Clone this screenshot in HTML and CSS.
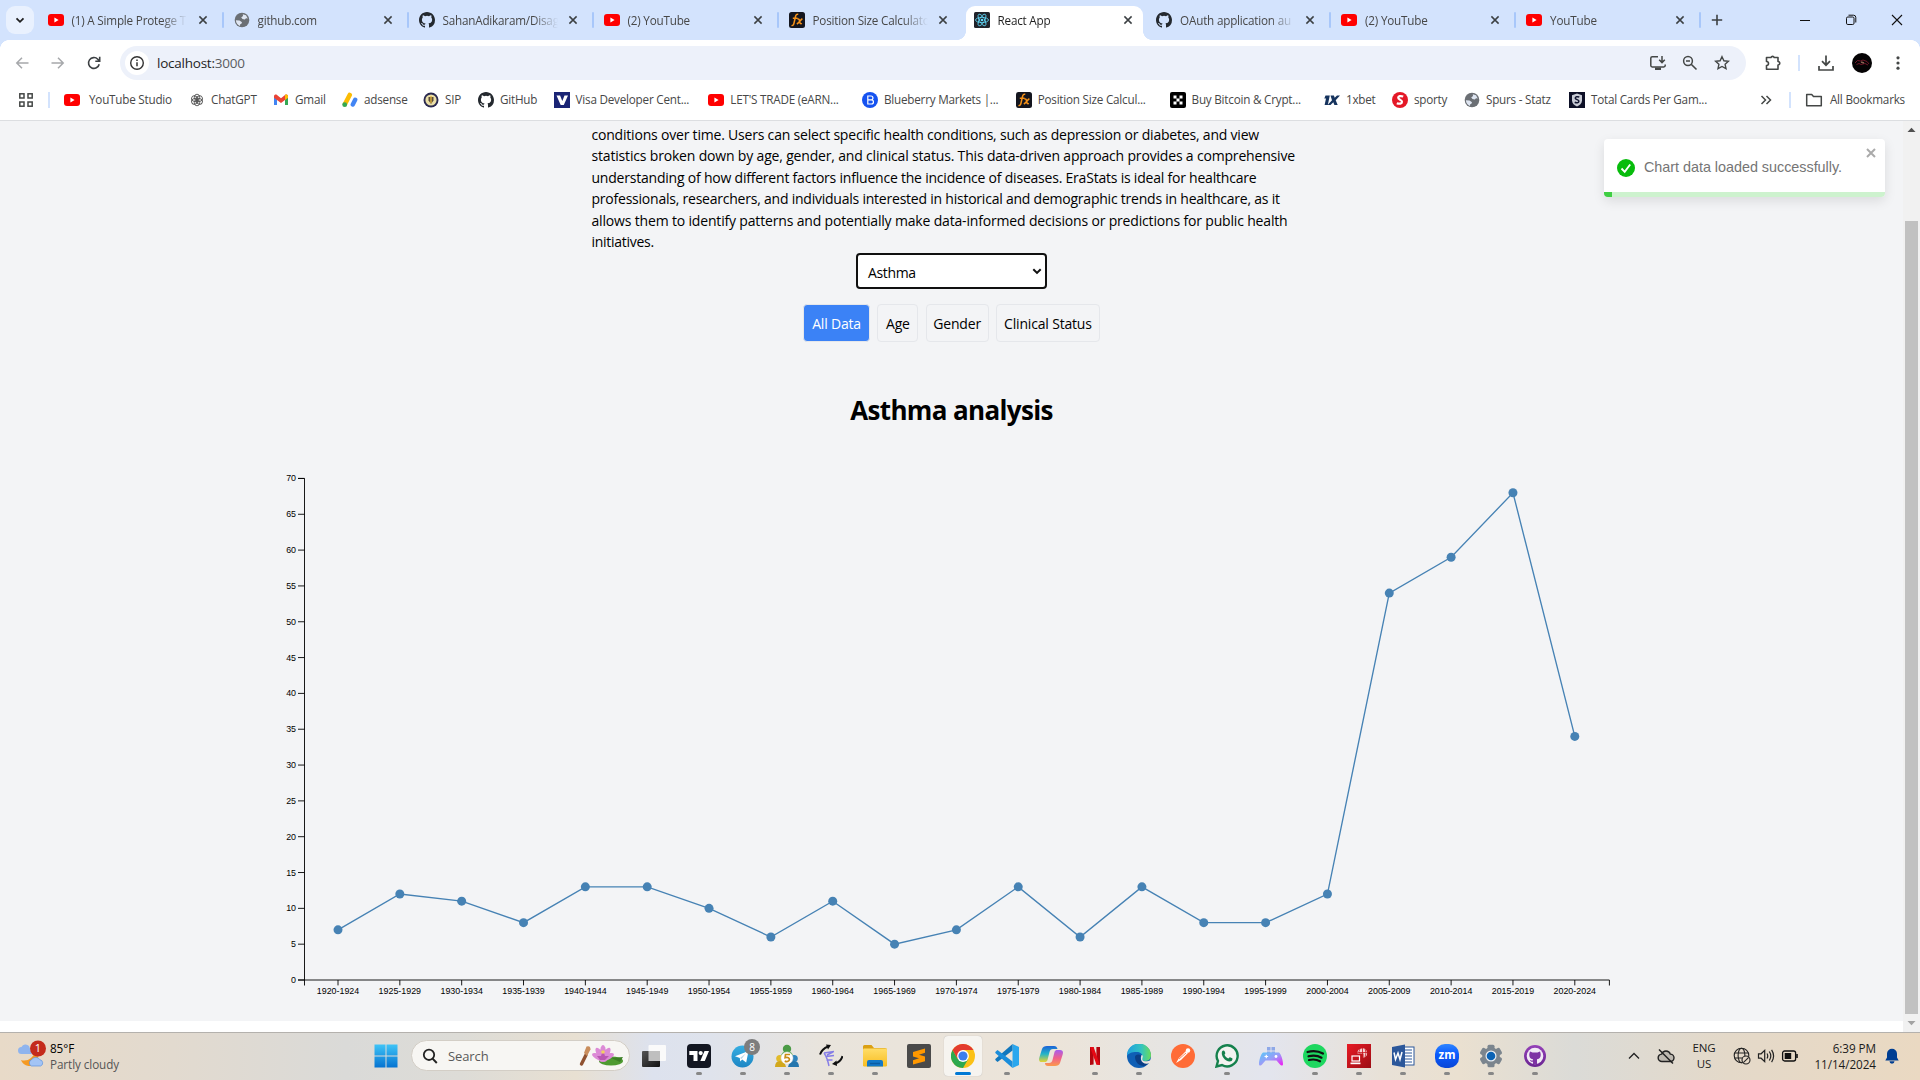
FILE: index.html
```html
<!DOCTYPE html>
<html lang="en">
<head>
<meta charset="utf-8">
<title>React App</title>
<link rel="stylesheet" href="styles.css">
</head>
<body>
<svg class="defs" width="0" height="0">
  <defs>
    <linearGradient id="gWin" x1="0" y1="0" x2="0" y2="1"><stop offset="0" stop-color="#3fc4f7"/><stop offset="1" stop-color="#0573d1"/></linearGradient>
    <linearGradient id="gTg" x1="0" y1="0" x2="0" y2="1"><stop offset="0" stop-color="#37aee2"/><stop offset="1" stop-color="#1c86c4"/></linearGradient>
    <linearGradient id="gFold" x1="0" y1="0" x2="0" y2="1"><stop offset="0" stop-color="#ffdd67"/><stop offset="1" stop-color="#f8bd22"/></linearGradient>
    <linearGradient id="gDark" x1="0" y1="0" x2="1" y2="1"><stop offset="0" stop-color="#555"/><stop offset="1" stop-color="#111"/></linearGradient>
    <linearGradient id="gEdge" x1="0" y1="0" x2="1" y2="0"><stop offset="0" stop-color="#1e9fe0"/><stop offset=".6" stop-color="#34c3c0"/><stop offset="1" stop-color="#6bdc5a"/></linearGradient>
    <linearGradient id="gCopA" x1="0" y1="0" x2="0" y2="1"><stop offset="0" stop-color="#1b62d8"/><stop offset=".5" stop-color="#22b5c8"/><stop offset="1" stop-color="#e8d32f"/></linearGradient>
    <linearGradient id="gCopB" x1="0" y1="0" x2="0" y2="1"><stop offset="0" stop-color="#a65cf0"/><stop offset=".5" stop-color="#f0608c"/><stop offset="1" stop-color="#fb9a4b"/></linearGradient>
    <linearGradient id="gPad" x1="0" y1="0" x2="1" y2="1"><stop offset="0" stop-color="#58c8f8"/><stop offset=".5" stop-color="#9a9cf8"/><stop offset="1" stop-color="#f416f4"/></linearGradient>
    <linearGradient id="gZm" x1="0" y1="0" x2="0" y2="1"><stop offset="0" stop-color="#2f86ff"/><stop offset=".4" stop-color="#0b5cff"/><stop offset="1" stop-color="#0845d6"/></linearGradient>
    <linearGradient id="gRed" x1="0" y1="0" x2="1" y2="1"><stop offset="0" stop-color="#e81a24"/><stop offset="1" stop-color="#9c0d14"/></linearGradient>
    <linearGradient id="gPur" x1="0" y1="0" x2="0" y2="1"><stop offset="0" stop-color="#9440b8"/><stop offset="1" stop-color="#6a2592"/></linearGradient>
  </defs>
  <symbol id="yt" viewBox="0 0 16 16"><rect y="2" width="16" height="12" rx="3" fill="#f00"/><path d="M6.4 5.6v4.8L10.6 8z" fill="#fff"/></symbol>
  <symbol id="gh" viewBox="0 0 16 16"><path fill="#24292f" d="M8 0C3.58 0 0 3.58 0 8c0 3.54 2.29 6.53 5.47 7.59.4.07.55-.17.55-.38 0-.19-.01-.82-.01-1.49-2.01.37-2.53-.49-2.69-.94-.09-.23-.48-.94-.82-1.13-.28-.15-.68-.52-.01-.53.63-.01 1.08.58 1.23.82.72 1.21 1.87.87 2.33.66.07-.52.28-.87.51-1.07-1.78-.2-3.64-.89-3.64-3.95 0-.87.31-1.59.82-2.15-.08-.2-.36-1.02.08-2.12 0 0 .67-.21 2.2.82a7.6 7.6 0 0 1 4 0c1.53-1.04 2.2-.82 2.2-.82.44 1.1.16 1.92.08 2.12.51.56.82 1.27.82 2.15 0 3.07-1.87 3.75-3.65 3.95.29.25.54.73.54 1.48 0 1.07-.01 1.93-.01 2.2 0 .21.15.46.55.38A8 8 0 0 0 16 8c0-4.42-3.58-8-8-8z"/></symbol>
  <symbol id="globe" viewBox="0 0 16 16"><circle cx="8" cy="8" r="7.3" fill="#6b6f74"/><path d="M8.800 2.200L12 3.300 13.800 6.500 12 6.200 10.800 7.600 8.500 7 7.200 5.400 9 4z" fill="#dfe6f2"/><path d="M1.900 8.300L5.500 8.500 8 10.300 7.400 11.800 6.200 12.300 6 14C3.600 13 2 11 1.900 8.300z" fill="#dfe6f2"/></symbol>
  <symbol id="fx" viewBox="0 0 16 16"><rect width="16" height="16" rx="2.500" fill="#14161f"/><path d="M9.300 2.400C7.800 1.900 6.900 2.800 6.500 4.500L4.900 11.500C4.500 13.200 3.600 13.900 2.500 13.300M3.800 6.300h4.700M8.300 7.200c1.600-.8 2 .3 2.300 2.200.3 2 .9 2.700 2.300 2M13.400 6.800C11.500 7.600 10.500 10.600 7.800 12" fill="none" stroke="#f7931a" stroke-width="1.500"/></symbol>
  <symbol id="react" viewBox="0 0 16 16"><rect width="16" height="16" rx="1.500" fill="#20232a"/><g fill="none" stroke="#61dafb" stroke-width=".8" transform="translate(8 8)"><ellipse rx="6.500" ry="2.600"/><ellipse rx="6.500" ry="2.600" transform="rotate(60)"/><ellipse rx="6.500" ry="2.600" transform="rotate(120)"/></g><circle cx="8" cy="8" r="1.300" fill="#61dafb"/></symbol>
  <symbol id="x" viewBox="0 0 16 16"><path d="M4.400 4.400l7.200 7.200M11.600 4.400l-7.200 7.200" stroke="#3c4043" stroke-width="1.500"/></symbol>
</svg>

<div class="tabstrip">
  <div class="tabsearch"><svg width="12" height="12" viewBox="0 0 12 12"><path d="M2.500 4.300L6 7.800l3.500-3.500" fill="none" stroke="#1f1f1f" stroke-width="1.800"/></svg></div>
  <div class="tab first"><svg class="fav"><use href="#yt"/></svg><span class="title">(1) A Simple Protege T</span><svg class="close"><use href="#x"/></svg></div>
  <div class="tab"><svg class="fav"><use href="#globe"/></svg><span class="title">github.com</span><svg class="close"><use href="#x"/></svg></div>
  <div class="tab"><svg class="fav"><use href="#gh"/></svg><span class="title">SahanAdikaram/Disag</span><svg class="close"><use href="#x"/></svg></div>
  <div class="tab"><svg class="fav"><use href="#yt"/></svg><span class="title">(2) YouTube</span><svg class="close"><use href="#x"/></svg></div>
  <div class="tab nosep"><svg class="fav"><use href="#fx"/></svg><span class="title">Position Size Calculato</span><svg class="close"><use href="#x"/></svg></div>
  <div class="tab active"><svg class="fav"><use href="#react"/></svg><span class="title">React App</span><svg class="close"><use href="#x"/></svg></div>
  <div class="tab"><svg class="fav"><use href="#gh"/></svg><span class="title">OAuth application au</span><svg class="close"><use href="#x"/></svg></div>
  <div class="tab"><svg class="fav"><use href="#yt"/></svg><span class="title">(2) YouTube</span><svg class="close"><use href="#x"/></svg></div>
  <div class="tab"><svg class="fav"><use href="#yt"/></svg><span class="title">YouTube</span><svg class="close"><use href="#x"/></svg></div>
  <svg class="newtab" width="16" height="16" viewBox="0 0 16 16"><path d="M8 2.800v10.400M2.800 8h10.400" stroke="#3c4043" stroke-width="1.600"/></svg>
  <div class="winbtns">
    <svg width="12" height="12" viewBox="0 0 12 12"><path d="M1 6.500h10" stroke="#111"/></svg>
    <svg width="12" height="12" viewBox="0 0 12 12"><rect x="1.500" y="3" width="7.500" height="7.500" rx="1.300" fill="none" stroke="#111"/><path d="M3.500 1.200h5a2.300 2.300 0 0 1 2.300 2.300v5" fill="none" stroke="#111"/></svg>
    <svg width="12" height="12" viewBox="0 0 12 12"><path d="M1 1l10 10M11 1L1 11" stroke="#111" stroke-width="1.100"/></svg>
  </div>
</div>

<div class="toolbar">
  <div class="nav">
    <svg width="16" height="16" viewBox="0 0 16 16"><path d="M14.500 8H3M8 2.800L2.800 8 8 13.200" fill="none" stroke="#a6a8ab" stroke-width="1.500"/></svg>
    <svg width="16" height="16" viewBox="0 0 16 16"><path d="M1.500 8H13M8 2.800L13.200 8 8 13.200" fill="none" stroke="#a6a8ab" stroke-width="1.500"/></svg>
    <svg width="16" height="16" viewBox="0 0 16 16"><path d="M13.200 9.200A5.400 5.400 0 1 1 11.800 4.200L13.200 5.700M13.700 1.800V6.200H9.300" fill="none" stroke="#3c4043" stroke-width="1.600"/></svg>
  </div>
  <div class="omnibox">
    <span class="site"><svg width="16" height="16" viewBox="0 0 16 16"><circle cx="8" cy="8" r="6.300" fill="none" stroke="#333" stroke-width="1.400"/><path d="M8 7.200v4M8 4.500v1.500" stroke="#333" stroke-width="1.500"/></svg></span>
    <span class="url">localhost:<i>3000</i></span>
    <div class="omni-icons">
      <svg width="18" height="16" viewBox="0 0 18 16"><path d="M9 1.700H3.200A1.400 1.400 0 0 0 1.800 3v7.600A1.400 1.400 0 0 0 3.200 12h11.600a1.400 1.400 0 0 0 1.400-1.400V9.500M13 1v6M10.200 4.800L13 7.600l2.800-2.800" fill="none" stroke="#444746" stroke-width="1.500"/><path d="M6 12.500h6V15H6z" fill="#444746"/></svg>
      <svg width="16" height="16" viewBox="0 0 16 16"><circle cx="6" cy="6" r="4.400" fill="none" stroke="#444746" stroke-width="1.500"/><path d="M4 6h4M9.200 9.200l5.300 5.300" stroke="#444746" stroke-width="1.600"/></svg>
      <svg width="16" height="16" viewBox="0 0 16 16"><path d="M8 1.700l1.900 4.100 4.500.5-3.300 3 .9 4.400L8 11.500l-4 2.200.9-4.400-3.300-3 4.500-.5z" fill="none" stroke="#444746" stroke-width="1.400"/></svg>
    </div>
  </div>
  <div class="tools">
    <svg class="t-ext" width="18" height="18" viewBox="0 0 18 18"><path d="M2.500 3.500H7A1.700 1.700 0 0 1 10.200 3.500H14V7.500A1.700 1.700 0 0 1 14 11V15.300H2.500V11.500A2 2 0 0 0 2.500 7.500z" fill="none" stroke="#444746" stroke-width="1.600" stroke-linejoin="round"/></svg>
    <span class="vsep"></span>
    <svg width="18" height="18" viewBox="0 0 18 18"><path d="M9 1.500v9.500M5 7.200l4 4 4-4M2 12v4h14v-4" fill="none" stroke="#444746" stroke-width="1.700"/></svg>
    <svg width="20" height="20" viewBox="0 0 20 20"><circle cx="10" cy="10" r="10" fill="#050304"/><path d="M3 10l2.500-2.500 3 .5 2.500-1 4 1.500 2 2.500M4.500 11.500l2.500-1 2 1 4-1 3 1.500" fill="none" stroke="#7c1a2c" stroke-width=".9"/><path d="M9 9l3 1" stroke="#8b6354" stroke-width="1.600"/></svg>
    <svg width="16" height="16" viewBox="0 0 16 16"><g fill="#444746"><circle cx="8" cy="2.800" r="1.600"/><circle cx="8" cy="8" r="1.600"/><circle cx="8" cy="13.200" r="1.600"/></g></svg>
  </div>
</div>

<div class="bookmarks">
  <svg class="apps" width="14" height="14" viewBox="0 0 14 14"><g fill="none" stroke="#444746" stroke-width="1.500"><rect x=".8" y=".8" width="4.200" height="4.200"/><rect x="9" y=".8" width="4.200" height="4.200"/><rect x=".8" y="9" width="4.200" height="4.200"/><rect x="9" y="9" width="4.200" height="4.200"/></g></svg>
  <span class="bsep"></span>
  <div class="bm-list">
    <div class="bm wide"><svg><use href="#yt"/></svg><span>YouTube Studio</span></div>
    <div class="bm"><svg viewBox="0 0 16 16"><g fill="none" stroke="#555" stroke-width=".9" transform="translate(8 8)"><ellipse cx="0" cy="-2.600" rx="2.700" ry="3.200"/><ellipse cx="0" cy="-2.600" rx="2.700" ry="3.200" transform="rotate(60)"/><ellipse cx="0" cy="-2.600" rx="2.700" ry="3.200" transform="rotate(120)"/><ellipse cx="0" cy="-2.600" rx="2.700" ry="3.200" transform="rotate(180)"/><ellipse cx="0" cy="-2.600" rx="2.700" ry="3.200" transform="rotate(240)"/><ellipse cx="0" cy="-2.600" rx="2.700" ry="3.200" transform="rotate(300)"/></g></svg><span>ChatGPT</span></div>
    <div class="bm"><svg viewBox="0 0 16 16"><path d="M1 3.500V13h3V7z" fill="#4285f4"/><path d="M15 3.500V13h-3V7z" fill="#34a853"/><path d="M1 4.500C1 2.500 3 2 4 3l4 3.200L12 3c1-1 3-.5 3 1.500v1.300L8 11 1 5.800z" fill="#ea4335"/><path d="M12 3c1-1 3-.5 3 1.500v1.300L12 8z" fill="#fbbc04"/></svg><span>Gmail</span></div>
    <div class="bm"><svg viewBox="0 0 16 16"><path d="M7.700 3L3 12" stroke="#fbbc04" stroke-width="4.600" stroke-linecap="round"/><path d="M13.200 7.800l-2.400 4.700" stroke="#4285f4" stroke-width="4.400" stroke-linecap="round"/><circle cx="2.700" cy="12.700" r="2.400" fill="#34a853"/></svg><span>adsense</span></div>
    <div class="bm"><svg viewBox="0 0 16 16"><circle cx="8" cy="8" r="7.500" fill="#2a2950"/><circle cx="8" cy="8" r="5.600" fill="#eadfa8"/><path d="M5.500 5h5v3.500L8 12 5.500 8.500z" fill="#5a4a38"/><path d="M8 4v7" stroke="#e8b93d" stroke-width="1.300"/></svg><span>SIP</span></div>
    <div class="bm"><svg><use href="#gh"/></svg><span>GitHub</span></div>
    <div class="bm"><svg viewBox="0 0 16 16"><rect width="16" height="16" fill="#1a2475"/><path d="M2.500 3.500h3.600L8.300 9l2.200-5.500H14L9.800 13H6.700z" fill="#fff"/></svg><span>Visa Developer Cent...</span></div>
    <div class="bm"><svg><use href="#yt"/></svg><span>LET'S TRADE (eARN...</span></div>
    <div class="bm"><svg viewBox="0 0 16 16"><circle cx="8" cy="8" r="8" fill="#1552f0"/><path d="M5.800 4h3.200a1.900 1.900 0 0 1 0 3.900H5.800zM5.800 7.900h3.600a2 2 0 0 1 0 4.100H5.800z" fill="none" stroke="#fff" stroke-width="1.200"/></svg><span>Blueberry Markets |...</span></div>
    <div class="bm"><svg><use href="#fx"/></svg><span>Position Size Calcul...</span></div>
    <div class="bm"><svg viewBox="0 0 16 16"><rect width="16" height="16" rx="2" fill="#000"/><path d="M3.500 3.500h3v3h-3zM9.500 3.500h3v3h-3zM6.500 6.500h3v3h-3zM3.500 9.500h3v3h-3zM9.500 9.500h3v3h-3z" fill="#fff"/></svg><span>Buy Bitcoin &amp; Crypt...</span></div>
    <div class="bm"><svg viewBox="0 0 16 16"><path d="M1.500 3.500h4.300L3.800 13H.6L2 6.500H.3zM6.500 3.500h3.400l.8 2.300L13 3.500h3l-4.300 4.700L13.700 13h-3.300L9.300 10.200 6.500 13H3.600L8 8.200z" fill="#16345e"/></svg><span>1xbet</span></div>
    <div class="bm"><svg viewBox="0 0 16 16"><circle cx="8" cy="8" r="8" fill="#e41827"/><path d="M11.200 4.500C8.500 3.500 6.200 4.200 6.200 5.800c0 2 3.800 1.700 3.800 3.900 0 2-2.800 2.500-5.200 1.500" fill="none" stroke="#fff" stroke-width="2.200"/></svg><span>sporty</span></div>
    <div class="bm"><svg><use href="#globe"/></svg><span>Spurs - Statz</span></div>
    <div class="bm"><svg viewBox="0 0 16 16"><rect width="16" height="16" fill="#0d1027"/><path d="M8 1.500l5 1.700v5.300c0 3-2.500 5-5 6-2.500-1-5-3-5-6V3.200z" fill="#c9ccd6"/><path d="M10.300 5C8.500 4.300 6 4.800 6.300 6.300c.3 1.500 3.700 1.200 3.600 3-.1 1.600-2.500 1.800-4.200 1" fill="none" stroke="#111530" stroke-width="1.500"/></svg><span>Total Cards Per Gam...</span></div>
  </div>
  <svg class="more" width="12" height="12" viewBox="0 0 12 12"><path d="M1.500 2l4 4-4 4M6.500 2l4 4-4 4" fill="none" stroke="#444746" stroke-width="1.500"/></svg>
  <span class="bsep b2"></span>
  <svg class="folder" width="18" height="16" viewBox="0 0 18 16"><path d="M1.700 2.500h5l1.800 2h7.800v9.200H1.700z" fill="none" stroke="#444746" stroke-width="1.500" stroke-linejoin="round"/></svg>
  <span class="allbm">All Bookmarks</span>
</div>

<div class="viewport">
  <div class="page">
    <main class="content">
      <p class="intro">
        <span class="s1">conditions over time. Users can select specific health conditions, such as depression or diabetes, and view</span>
        <span class="s2">statistics broken down by age, gender, and clinical status. This data-driven approach provides a comprehensive</span>
        <span class="s3">understanding of how different factors influence the incidence of diseases. EraStats is ideal for healthcare</span>
        <span class="s4">professionals, researchers, and individuals interested in historical and demographic trends in healthcare, as it</span>
        <span class="s5">allows them to identify patterns and potentially make data-informed decisions or predictions for public health</span>
        <span class="s6">initiatives.</span>
      </p>
      <div class="select"><span>Asthma</span><svg width="12" height="12" viewBox="0 0 12 12"><path d="M2.300 4.200L6 7.900l3.700-3.700" fill="none" stroke="#111" stroke-width="2"/></svg></div>
      <div class="filters">
        <button class="btn on w1">All Data</button><button class="btn w2">Age</button><button class="btn w3">Gender</button><button class="btn w4">Clinical Status</button>
      </div>
      <h1>Asthma analysis</h1>
      <svg id="chart" width="1903" height="581" viewBox="0 440 1903 581"></svg>
    </main>
    <div class="toast">
      <div class="toast-body">
        <svg width="18" height="18" viewBox="0 0 18 18"><circle cx="9" cy="9" r="9" fill="#07bc0c"/><path d="M4.500 9.500l3.200 3.300 5.500-7.300" fill="none" stroke="#fff" stroke-width="1.900"/></svg>
        <span>Chart data loaded successfully.</span>
      </div>
      <svg class="toast-x" width="12" height="12" viewBox="0 0 12 12"><path d="M2 2l8 8M10 2l-8 8" stroke="#aaa" stroke-width="2"/></svg>
      <div class="bar"><i></i></div>
    </div>
  </div>
  <div class="scroll">
    <svg width="9" height="6" viewBox="0 0 9 6"><path d="M.5 5L4.500 .8 8.500 5z" fill="#505050"/></svg>
    <div class="thumb"></div>
    <svg width="9" height="6" viewBox="0 0 9 6"><path d="M.5 1L4.500 5.200 8.500 1z" fill="#a3a3a3"/></svg>
  </div>
</div>

<div class="taskbar">
  <div class="weather">
    <svg width="30" height="30" viewBox="0 0 30 30"><path d="M5 21a9 9 0 0 0 16 2l3-13-6 3c0 6-7 10-13 8z" fill="#f59a23"/><path d="M5.500 15a3.500 3.500 0 0 1 0-7 4.500 4.500 0 0 1 7.500-1l3 8z" fill="#8fb4ee"/><path d="M15.500 27a3.300 3.300 0 0 1 0-6.200 5 5 0 0 1 8.500 0 3.200 3.200 0 0 1 .5 6.200z" fill="#a3c4f5" stroke="#5f93e0" stroke-width=".7"/><circle cx="22" cy="9.500" r="8" fill="#c42b1c"/></svg>
    <span class="wbadge">1</span>
    <div class="wtext"><span>85°F</span><span class="dim">Partly cloudy</span></div>
  </div>
  <svg class="start" width="24" height="24" viewBox="0 0 24 24"><path d="M.500 .500h11v11H.500zM12.500 .500h11v11h-11zM.500 12.500h11v11H.500zM12.500 12.500h11v11h-11z" fill="url(#gWin)"/></svg>
  <div class="search">
    <svg width="16" height="16" viewBox="0 0 16 16"><circle cx="7" cy="6.800" r="5.200" fill="none" stroke="#222" stroke-width="1.800"/><path d="M10.600 10.600l4.200 4.400" stroke="#222" stroke-width="2"/></svg>
    <span>Search</span>
    <svg width="46" height="24" viewBox="0 0 46 24"><path d="M3.500 20L8 11" stroke="#8f5130" stroke-width="3.400" stroke-linecap="round"/><path d="M6 9L8.500 2.500q4-1.500 4 3l-3.500 6.500z" fill="#c98d5c"/><ellipse cx="33" cy="17" rx="12" ry="4.500" fill="#4e9a31"/><path d="M33 14l12-1-3 5z" fill="#3b7f25"/><g fill="#dc8ad6"><ellipse cx="25" cy="9" rx="3" ry="8"/><ellipse cx="25" cy="10" rx="3" ry="8" transform="rotate(-32 25 15)"/><ellipse cx="25" cy="10" rx="3" ry="8" transform="rotate(32 25 15)"/><ellipse cx="25" cy="11" rx="3" ry="8" transform="rotate(-65 25 15)"/><ellipse cx="25" cy="11" rx="3" ry="8" transform="rotate(65 25 15)"/></g><path d="M25 6l2 6h4l-4 4h-5l-3-4h4z" fill="#b957b2"/><circle cx="25" cy="8" r="1.800" fill="#f2cf62"/></svg>
  </div>
  <div class="apps-row">
    <div class="app"><svg viewBox="0 0 24 24"><rect x="6.500" y="1" width="17.500" height="16" rx="1" fill="#fafafa"/><rect x="0" y="7" width="18" height="16" rx="1" fill="url(#gDark)"/><rect x="6.500" y="7" width="11.500" height="10" fill="#bfbfbf"/></svg></div>
    <div class="app run"><svg viewBox="0 0 24 24"><rect width="24" height="24" rx="4" fill="#131722"/><path d="M2.300 7h8.200v10H6.500v-6H2.300zM17.500 7H22l-4.200 10h-4.500z" fill="#fff"/><circle cx="13.700" cy="9.100" r="2.100" fill="#fff"/></svg></div>
    <div class="app run"><svg viewBox="0 0 24 24"><circle cx="11.500" cy="12.500" r="11" fill="url(#gTg)"/><path d="M4 12.300L17.500 7l-2.300 11.500-4-2.900-2 1.900-.4-3.400z" fill="#fff"/><path d="M9 14l6-4.800-4.500 5.800z" fill="#b8d8ea"/></svg><span class="badge">8</span></div>
    <div class="app run"><svg viewBox="0 0 24 24"><circle cx="12" cy="5" r="4.200" fill="#4b9b46"/><path d="M5 15q1-8 7-8t7 8z" fill="#57a54e"/><circle cx="4.800" cy="14.500" r="3.600" fill="#e2bb2b"/><path d="M0 23q0-6 5-6t6 6z" fill="#d2a81c"/><circle cx="19.200" cy="14.500" r="3.600" fill="#2e83bd"/><path d="M13 23q1-6 6-6t5 6z" fill="#2576ad"/><circle cx="12" cy="14" r="6" fill="#fff" stroke="#ddd" stroke-width=".5"/><path d="M15 10.500h-4.500l-.4 3.200c3-.8 4.500.3 4.300 2-.2 2-2.800 2.200-4.700 1.400" fill="none" stroke="#c98d18" stroke-width="1.700"/></svg></div>
    <div class="app run"><svg viewBox="0 0 24 24"><path d="M1 10.500C2.500 6 5 4 9 2.500" fill="none" stroke="#111" stroke-width="2"/><path d="M7 .5l5 .5-3 4.500z" fill="#111"/><path d="M23.500 12c-1 4-4 6.500-7.500 7.500" fill="none" stroke="#111" stroke-width="2"/><path d="M17.500 16.500L13 20l5 2z" fill="#111"/><path d="M5 9l10-1.500M7 12.500l8-1M7.500 16l6 0M5 9q3 4 5 13M8 11l6-3" fill="none" stroke="#857de6" stroke-width="1.400"/></svg></div>
    <div class="app run"><svg viewBox="0 0 24 24"><path d="M0 2.500a1.500 1.500 0 0 1 1.500-1.500h7l2.500 3H22a2 2 0 0 1 2 2v2H0z" fill="#dba013"/><rect y="4.500" width="24" height="18" rx="1.200" fill="url(#gFold)"/><path d="M4 22.500V18a2 2 0 0 1 2-2h12a2 2 0 0 1 2 2v4.500z" fill="#1378c8"/><path d="M7 19.500h10" stroke="#0b5ca3" stroke-width="1.500"/></svg></div>
    <div class="app"><svg viewBox="0 0 24 24"><rect width="24" height="24" rx="2" fill="#4a4a4a"/><path d="M18 4.500v4.300l-6 2 6 1.800v4.600L6 20.500v-4.300l6-2-6-1.800V8z" fill="#ff9800"/></svg></div>
    <div class="app cur"><svg viewBox="0 0 24 24"><circle cx="12" cy="12" r="12" fill="#fbc116"/><path d="M1.600 6A12 12 0 0 0 12 24l5.200-9L12 12 6.800 15z" fill="#2da94f"/><path d="M22.400 6H12L6.800 15 1.600 6A12 12 0 0 1 22.400 6z" fill="#e33b2e"/><circle cx="12" cy="12" r="5.900" fill="#fff"/><circle cx="12" cy="12" r="4.600" fill="#3b7ded"/></svg></div>
    <div class="app run"><svg viewBox="0 0 24 24"><path d="M17.500 0L24 3v18l-6.500 3z" fill="#2aa7ee"/><path d="M17.500 6.500L2.500 18 .3 16v-1L17.500 0z" fill="#1177bd"/><path d="M17.500 17.500L2.500 6 .3 8v1L17.500 24z" fill="#1a8ddb"/></svg></div>
    <div class="app"><svg viewBox="0 0 24 24"><path d="M8 2h7c2 0 3 1 3.500 3H14c-2 0-3 1-3.500 3L8.500 16c-.5 1.500-1.500 2-3 2H3c-3 0-3.500-2-2.500-5L3 5c.6-2 2.500-3 5-3z" fill="url(#gCopA)"/><path d="M16 22H9c-2 0-3-1-3-3h4c2 0 3-1 3.500-3l2-8c.5-1.500 1.500-2 3-2H21c3 0 3.500 2 2.500 5L21 19c-.6 2-2.500 3-5 3z" fill="url(#gCopB)"/></svg></div>
    <div class="app run"><svg viewBox="0 0 24 24"><path d="M7 3h3.600v17.500L7 21zM13.400 3H17v18l-3.600-.5z" fill="#b1060f"/><path d="M7 3h3.600L17 21l-3.600-.5z" fill="#e50914"/></svg></div>
    <div class="app run"><svg viewBox="0 0 24 24"><circle cx="12" cy="12" r="12" fill="#0f5fb5"/><path d="M0 12A12 12 0 0 1 24 11c0 5-3.500 6-6 6-3 0-4-1.500-3-3 1.500-4-2-6.500-6-6-4 0-8 1.500-9 4z" fill="url(#gEdge)"/><path d="M8 13c0 5 4 9 9 9 2-.5 4.500-2 5.500-4-4 2-9 0-9-4 0-1 .4-1.500 1-2.500-3-2-6.500-1-6.500 1.500z" fill="#0b3f86"/><path d="M14.500 11c3 .5 0 4 1 5 2 2.500 6 1 8.500 0l-1 3c-4 2-8.500 0-9-3.500-.2-1.500-.1-3 .5-4.500z" fill="#ebe5dc"/></svg></div>
    <div class="app"><svg viewBox="0 0 24 24"><circle cx="12" cy="12" r="12" fill="#ff6c37"/><path d="M5 19l3-5 7-7 2 2-7 7z" fill="#fff"/><circle cx="17" cy="6.500" r="2.200" fill="#fff"/><path d="M8 15l7-6" stroke="#ff6c37" stroke-width=".8"/></svg></div>
    <div class="app run"><svg viewBox="0 0 24 24"><path d="M1.500 22.500L3 17A10.500 10.500 0 1 1 7 21z" fill="#f3f3f0" stroke="#15814d" stroke-width="2.400"/><path d="M7 7.500c.5-1.200 2-1.500 2.500-.5l.8 2c.2.600-.8 1.300-.8 1.800.8 1.800 2 2.800 3.700 3.600.6 0 1.200-1.400 1.800-1.200l2.200 1.100c.8.400 0 2.500-1.200 3C11 18.500 5.500 12 7 7.500z" fill="#15814d"/></svg></div>
    <div class="app"><svg viewBox="0 0 24 24"><path d="M8 3h3.500v3.500H8zM12.500 3H16v3.500h-3.500zM8 7.500h3.500V9H8zM12.500 7.500H16V9h-3.500z" fill="#8ea8e8"/><path d="M4 8.500h16c2 1.500 4 7.500 4 11.500 0 2-2 2-3 .5L17.500 16.500h-11L3 20.500C2 22 0 22 0 20 0 16 2 10 4 8.500z" fill="url(#gPad)"/><path d="M5.500 12.500h3.600M7.300 10.700v3.600" stroke="#fff" stroke-width="1.200"/><circle cx="17" cy="12.500" r="1.400" fill="#fff"/></svg></div>
    <div class="app run"><svg viewBox="0 0 24 24"><circle cx="12" cy="12" r="12" fill="#1ed760"/><path d="M4.500 8c5-1.500 11-1 15.500 1.500M5.500 12.300c4.500-1.200 9.500-.7 13 1.400M6 16c4-.9 7.700-.6 11 1.300" fill="none" stroke="#111" stroke-width="2.200" stroke-linecap="round"/></svg></div>
    <div class="app run"><svg viewBox="0 0 24 24"><rect width="24" height="24" fill="url(#gRed)"/><rect x="5" y="12" width="7.500" height="5" fill="none" stroke="#fff" stroke-width="1.200"/><path d="M3.500 18.500h10v1.700h-10z" fill="#fff"/><path d="M10.500 9.500a4.800 4.800 0 1 1 6 4.300v-4.300z" fill="#f6d5d5"/><path d="M15.500 4v10M10.500 8.500h10M13 4.500q-2 4 0 5M18 4.500q2 4 0 9" stroke="#c8151e" fill="none" stroke-width=".8"/></svg></div>
    <div class="app run"><svg viewBox="0 0 24 24"><rect x="11" y="3" width="12" height="18" fill="#fff" stroke="#2b579a"/><path d="M14 6h7M14 9h7M14 12h7M14 15h7M14 18h7" stroke="#2b579a"/><path d="M1 3L14 .500v23L1 21z" fill="#2b579a"/><path d="M3 8.500l1.500 7L7 9l2 6.500 2-7.500" fill="none" stroke="#fff" stroke-width="1.500"/></svg></div>
    <div class="app run"><svg viewBox="0 0 24 24"><rect width="24" height="24" rx="10" fill="url(#gZm)"/></svg><span class="zm">zm</span></div>
    <div class="app run"><svg viewBox="0 0 24 24"><g fill="#7b858e"><rect x="8.500" y=".7" width="7" height="22.600" rx="1.500"/><rect x="8.500" y=".7" width="7" height="22.600" rx="1.500" transform="rotate(60 12 12)"/><rect x="8.500" y=".7" width="7" height="22.600" rx="1.500" transform="rotate(120 12 12)"/><circle cx="12" cy="12" r="8.800"/></g><circle cx="12" cy="12" r="5.500" fill="#eceff2"/><circle cx="12" cy="12" r="4.300" fill="#0b63b5"/></svg></div>
    <div class="app run"><svg viewBox="0 0 24 24"><circle cx="12" cy="12" r="11" fill="url(#gPur)"/><circle cx="12" cy="12" r="8.300" fill="#f2eaf6"/><path d="M7 7.500L9.500 8.500h5L17 7.500c.8 2 .9 3.500.5 5-.6 1.800-2 2.500-3.500 2.800v5h-4v-2.500c-2 .4-2.500-1-3.300-1.800 1-.3 1.500 1 3 .6 0-.6.1-1 .5-1.300-1.900-.3-3.200-1-3.700-2.800-.4-1.500-.3-3 .5-5z" fill="#7e33a4"/></svg></div>
  </div>
  <div class="tray">
    <svg width="12" height="12" viewBox="0 0 12 12"><path d="M1 8.500l5-5 5 5" fill="none" stroke="#222" stroke-width="1.300"/></svg>
    <svg width="18" height="18" viewBox="0 0 18 18"><path d="M5 14.500a3.700 3.700 0 0 1-.3-7.400 4.500 4.500 0 0 1 8.600 0 3.700 3.700 0 0 1 0 7.400z" fill="#bdb8b0" stroke="#222" stroke-width="1.400"/><path d="M2 2.500l14 14" stroke="#222" stroke-width="1.500"/></svg>
    <div class="lang"><span>ENG</span><span>US</span></div>
    <svg width="18" height="18" viewBox="0 0 18 18"><g fill="none" stroke="#222" stroke-width="1.100"><circle cx="8.500" cy="8.500" r="7.300"/><ellipse cx="8.500" cy="8.500" rx="3.400" ry="7.300"/><path d="M1.800 6h13.400M1.800 11h8"/></g><circle cx="13" cy="13" r="4" fill="#e6d9c8" stroke="#222" stroke-width="1.100"/><path d="M10.300 15.700l5.400-5.400" stroke="#222" stroke-width="1.100"/></svg>
    <svg width="18" height="16" viewBox="0 0 18 16"><g fill="none" stroke="#222" stroke-width="1.200"><path d="M1.500 5.800h2.600l3.600-3.500v11.400l-3.600-3.500H1.500z"/><path d="M10 5.500q1.500 2.500 0 5M12.300 3.500q3 4.500 0 9M14.600 1.800q4 6.200 0 12.400"/></g></svg>
    <svg width="18" height="14" viewBox="0 0 18 14"><rect x="1.600" y="2" width="13" height="10" rx="2" fill="none" stroke="#111" stroke-width="1.300"/><path d="M3.700 4h6.500v6H3.700z" fill="#111"/><path d="M16 5v4" stroke="#111" stroke-width="1.600"/></svg>
    <div class="clock"><span>6:39 PM</span><span>11/14/2024</span></div>
    <svg width="14" height="16" viewBox="0 0 14 16"><path d="M7 .800a5 5 0 0 1 5 5V9.500l1.700 3H.3L2 9.500V5.800a5 5 0 0 1 5-5zM4.500 13.200h5a2.500 2.500 0 0 1-5 0z" fill="#003e92"/></svg>
  </div>
</div>
<script src="chart.js"></script>
</body>
</html>
```
FILE: styles.css
```css
* { box-sizing: border-box; }
body { margin: 0; width: 1920px; height: 1080px; overflow: hidden; display: flex; flex-direction: column; background: #fff; color: #000; font-family: "Open Sans", "Noto Sans", sans-serif; }
.defs { position: absolute; }
svg { display: block; flex: none; }

.tabstrip { height: 40px; flex: none; display: flex; align-items: flex-end; background: #d3e3fd; padding-left: 6px; }
.tabsearch { width: 28px; height: 28px; margin: 0 3.5px 6px 0; border-radius: 9px; background: #e9f1fe; display: grid; place-items: center; }
.tab { position: relative; width: 185px; height: 34px; display: flex; align-items: center; padding-left: 11px; color: #474747; }
.first { width: 186px; margin-left: -1px; }
.first .title { width: 117px; }
.fav { width: 16px; height: 16px; margin-bottom: 6px; }
.title { width: 116px; margin: 0 6px 6px 8px; font-size: 11.7px; letter-spacing: -0.2px; line-height: 16px; white-space: nowrap; overflow: hidden; -webkit-mask-image: linear-gradient(90deg, #000 90px, transparent 115px); mask-image: linear-gradient(90deg, #000 90px, transparent 115px); }
.close { width: 16px; height: 16px; margin-bottom: 6px; }
.tab::after { content: ""; position: absolute; right: -1px; top: 6px; width: 2px; height: 16px; background: #a8c7fa; border-radius: 1px; }
.nosep::after { display: none; }
.active { width: 182.6px; color: #1f1f1f; }
.active > * { position: relative; z-index: 1; }
.active::before { content: ""; position: absolute; left: 3px; right: 2px; top: 0; bottom: 0; background: #fff; border-radius: 9px 9px 0 0; }
.active::after { left: -6px; right: -7px; top: auto; bottom: 0; width: auto; height: 9px; border-radius: 0; background: radial-gradient(circle at 0 0, transparent 8.600px, #fff 9.200px) left / 9px 9px no-repeat, radial-gradient(circle at 100% 0, transparent 8.600px, #fff 9.200px) right / 9px 9px no-repeat; }
.newtab { margin: 0 0 12px 8.5px; }
.winbtns { display: flex; gap: 34px; margin: 0 17px 14px auto; }

.toolbar { height: 46px; flex: none; display: flex; align-items: center; background: radial-gradient(circle at 9px 9px, transparent 8.600px, #d3e3fd 9.200px) left top / 9px 9px no-repeat, radial-gradient(circle at 0 9px, transparent 8.600px, #d3e3fd 9.200px) right top / 9px 9px no-repeat, #fff; padding-left: 14px; }
.nav { display: flex; gap: 20px; width: 106px; }
.omnibox { width: 1626px; height: 34px; border-radius: 17px; background: #edf1fa; display: flex; align-items: center; padding: 0 16px 0 5px; }
.site { width: 24px; height: 24px; border-radius: 50%; background: #fff; display: grid; place-items: center; }
.url { margin-left: 8px; font-size: 13.5px; letter-spacing: -0.24px; color: #1f1f1f; }
.url i { font-style: normal; color: #5a5d61; }
.omni-icons { margin-left: auto; display: flex; align-items: center; gap: 16px; }
.omni-icons svg:first-child { margin-right: -1px; }
.tools { display: flex; align-items: center; margin-left: 18px; }
.vsep { width: 2px; height: 16px; margin-left: 16px; background: #d3e3fd; }
.tools svg:nth-child(4) { margin-right: 18px; }
.tools .vsep + svg { margin: 0 17px; }

.bookmarks { height: 35px; flex: none; display: flex; align-items: center; background: #fff; border-bottom: 1px solid #dcdee1; padding: 0 0 7px 19px; font-size: 11.7px; letter-spacing: -0.22px; color: #474747; }
.bsep { width: 2px; height: 16px; margin: 0 14px 0 15px; background: #d3e3fd; }
.bm-list { display: grid; grid-template-columns: 125px 84px 69px 81px 55px 75.6px 154.7px 153.7px 153.7px 153.9px 154.4px 68px 72px 105px 191px; }
.bm { display: flex; align-items: center; gap: 6px; white-space: nowrap; }
.bm span, .allbm { margin-bottom: 2px; }
.bm svg { width: 16px; height: 16px; }
.wide { gap: 9px; }
.b2 { margin: 0 14px 0 17px; }
.allbm { margin-left: 7px; }

.viewport { flex: 1; min-height: 0; display: flex; }
.page { position: relative; width: 1903px; overflow: hidden; background: #fff; }
.content { height: 900px; background: #f3f4f6; display: flex; flex-direction: column; align-items: center; }
.intro { width: 720px; margin: 2.500px 0 0; font-size: 14px; line-height: 21.6px; }
.intro span { display: block; white-space: nowrap; }
.s1 { letter-spacing: -0.2px; }
.s2 { letter-spacing: -0.176px; }
.s3 { letter-spacing: -0.214px; }
.s4 { letter-spacing: -0.227px; }
.s5 { letter-spacing: -0.17px; }
.s6 { letter-spacing: -0.28px; }
.select { width: 191px; height: 36px; border: 2px solid #101010; border-radius: 4px; background: #fff; display: flex; align-items: center; justify-content: space-between; padding: 2px 2px 0 10px; font-size: 14px; letter-spacing: -0.35px; }
.select svg { margin-bottom: 3px; }
.filters { display: flex; gap: 7.300px; margin-top: 15px; }
.btn { height: 37.500px; padding: 1px 0 0; border: 1px solid #e5e7eb; border-radius: 4px; background: transparent; font: 14px "Open Sans", sans-serif; letter-spacing: -0.18px; color: #000; white-space: nowrap; }
.on { background: #3b82f6; color: #fff; }
.w1 { width: 67px; }
.w2 { width: 41px; }
.w3 { width: 63px; }
.w4 { width: 104px; }
h1 { margin: 52.400px 0 0; height: 46px; font-size: 26px; line-height: 32px; letter-spacing: -0.64px; font-weight: 700; }
#chart text { font: 8.9px "Liberation Sans", Arial, sans-serif; fill: #000; }
.axis { fill: none; stroke: #000; stroke-width: 0.9; }
.line { fill: none; stroke: steelblue; stroke-width: 1.35; }
.dot { fill: steelblue; }

.toast { position: absolute; left: 1604px; top: 18px; width: 281px; height: 58px; border-radius: 4px; background: #fff; box-shadow: 0 4px 12px rgba(0, 0, 0, 0.1); }
.toast-body { display: flex; align-items: center; gap: 9px; height: 58px; padding-left: 13px; font: 14.4px "Liberation Sans", Arial, sans-serif; color: #757575; }
.toast-body span { margin-bottom: 2px; letter-spacing: -0.03px; }
.toast-x { position: absolute; right: 8px; top: 8px; }
.bar { position: absolute; left: 0; right: 0; bottom: 0; height: 5px; background: #cdf2ce; border-radius: 0 0 4px 4px; overflow: hidden; }
.bar i { display: block; width: 8px; height: 5px; background: #3fce43; }

.scroll { width: 17px; background: #f1f1f1; display: flex; flex-direction: column; align-items: center; padding: 6px 0 6px; }
.thumb { width: 13px; height: 793px; margin: 88px 0 auto; background: #c1c1c1; }

.taskbar { height: 48px; flex: none; border-top: 1px solid #b4b1ad; display: flex; align-items: center; padding-bottom: 2px; background: linear-gradient(90deg, #e8dac8 0%, #e2dacf 9%, #dadad8 18%, #dddcd7 24%, #e8e0d2 30%, #dde2ee 34%, #dfe3ec 37%, #e9e4dc 43%, #ece4d9 55%, #e6e5e3 61%, #e3e5ee 66%, #e8e1d7 72%, #eae0d0 76%, #dbdbd7 82%, #e4d9c9 90%, #ead9c2 100%); }
.weather { position: relative; width: 374px; height: 45px; padding-left: 16px; display: flex; align-items: center; font-size: 11.7px; }
.weather svg { margin-bottom: 4px; }
.wbadge { position: absolute; left: 30px; top: 7px; width: 16px; text-align: center; color: #fff; font-size: 11px; line-height: 16px; }
.wtext { display: flex; flex-direction: column; line-height: 16px; margin-left: 4px; letter-spacing: -0.08px; }
.dim { color: #555; }
.search { width: 219px; height: 31px; margin: 0 8px 0 13px; border-radius: 16px; background: #f7f6f3; border: 1px solid #d3cec6; display: flex; align-items: center; padding: 0 5px 0 10px; font-size: 13px; letter-spacing: -0.1px; color: #5a5a5a; }
.search span { margin: 0 auto 0 10px; }
.apps-row { display: flex; gap: 6px; margin-left: -2px; }
.app { position: relative; width: 38px; height: 40px; display: flex; justify-content: center; padding-top: 8px; border-radius: 4px; }
.app:first-child > svg { margin-left: -2px; }
.app > svg { width: 24px; height: 24px; }
.run::after, .cur::after { content: ""; position: absolute; bottom: 1px; width: 6px; height: 3px; border-radius: 2px; background: #878787; }
.cur { background: #f6f4f0; box-shadow: 0 0 1px #aaa; }
.cur::after { width: 16px; background: #0078d4; }
.badge { position: absolute; left: 20px; top: 3px; width: 16px; height: 16px; border-radius: 50%; background: #7d7d7d; color: #fff; font-size: 10px; line-height: 16px; text-align: center; }
.zm { position: absolute; top: 11px; left: 7px; width: 24px; text-align: center; color: #fff; font: 700 11.5px/16px "Open Sans", sans-serif; }
.tray { display: flex; align-items: center; margin-left: auto; padding-right: 21px; font-size: 11.7px; letter-spacing: -0.05px; color: #1b1b1b; }
.tray > svg:nth-child(1) { margin-right: 17px; }
.lang, .clock { display: flex; flex-direction: column; line-height: 16px; }
.lang { width: 24px; margin: 0 17px 0 17px; align-items: center; font-size: 11.5px; letter-spacing: -0.2px; }
.tray > svg:nth-child(4), .tray > svg:nth-child(5) { margin-right: 6px; }
.clock { width: 62px; margin: 0 9px 0 15px; align-items: flex-end; white-space: nowrap; }
```
FILE: chart.js
```js
const values = [7, 12, 11, 8, 13, 13, 10, 6, 11, 5, 7, 13, 6, 13, 8, 8, 12, 54, 59, 68, 34];
const left = 304.5, right = 1609.4, base = 980, unit = 7.165, first = 338, step = 61.84;
const x = i => first + i * step;
const y = v => base - v * unit;

let out = `<path class="axis" d="M298 ${y(70)}H${left}V${base}H298"/>`;
out += `<path class="axis" d="M${left} 985.500V${base}H${right}V985.500"/>`;
for (let v = 0; v <= 70; v += 5) {
  out += `<path class="axis" d="M298 ${y(v)}H${left}"/><text x="296" y="${y(v) + 3}" text-anchor="end">${v}</text>`;
}
values.forEach((v, i) => {
  const start = 1920 + i * 5;
  out += `<path class="axis" d="M${x(i)} ${base}v5.400"/><text x="${x(i)}" y="993.700" text-anchor="middle">${start}-${start + 4}</text>`;
});
out += `<polyline class="line" points="${values.map((v, i) => x(i) + ',' + y(v)).join(' ')}"/>`;
values.forEach((v, i) => { out += `<circle class="dot" cx="${x(i)}" cy="${y(v)}" r="4.500"/>`; });
document.getElementById('chart').innerHTML = out;
```
